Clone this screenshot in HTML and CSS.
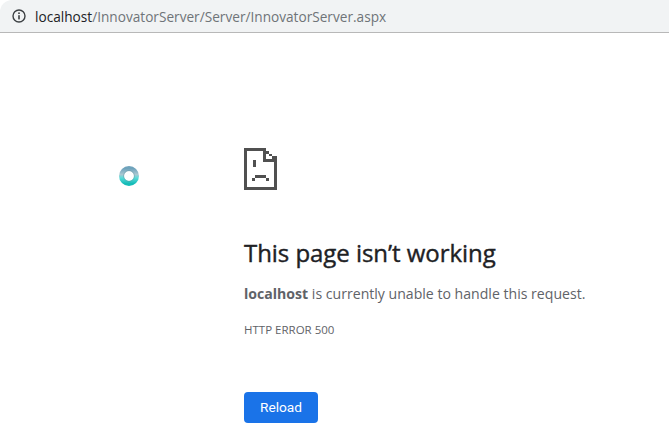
FILE: index.html
```html
<!DOCTYPE html>
<html lang="en">
<head>
<meta charset="utf-8">
<title>localhost</title>
<link rel="stylesheet" href="styles.css">
</head>
<body>
<header class="toolbar">
  <svg class="info-icon" width="14" height="14" viewBox="0 0 14 14" aria-hidden="true">
    <circle cx="7" cy="7" r="6" fill="none" stroke="#3c4043" stroke-width="1.4"/>
    <rect x="6.2" y="6.2" width="1.6" height="4.2" fill="#3c4043"/>
    <rect x="6.2" y="3.4" width="1.6" height="1.6" fill="#3c4043"/>
  </svg>
  <div class="url"><span class="host">localhost</span>/InnovatorServer/Server/InnovatorServer.aspx</div>
</header>
<svg class="spinner" width="20" height="20" viewBox="0 0 20 20" aria-hidden="true">
  <defs>
    <linearGradient id="ring" x1="0" y1="0" x2="0" y2="1">
      <stop offset="0" stop-color="#6fa3bc"/>
      <stop offset="0.4" stop-color="#a9c8d2"/>
      <stop offset="0.62" stop-color="#5cdcda"/>
      <stop offset="1" stop-color="#16bcb8"/>
    </linearGradient>
  </defs>
  <circle cx="10" cy="10" r="7.5" fill="none" stroke="url(#ring)" stroke-width="5"/>
  <circle cx="10" cy="10" r="5.4" fill="none" stroke="#5d8f9c" stroke-opacity="0.5" stroke-width="0.8"/>
</svg>
<main class="content">
  <svg class="sad-icon" width="34" height="42" viewBox="0 0 34 42" shape-rendering="crispEdges" aria-hidden="true">
    <path fill="#505050" d="M0 0H22V3H3V39H30V13H33V42H0Z"/>
    <path fill="#505050" d="M19 3H22V11H33V14H19Z"/>
    <path fill="#505050" d="M22 3H25V6H22ZM25 6H28V8H25ZM28 8H33V11H28Z"/>
    <rect x="9" y="12" width="3" height="7" fill="#505050"/>
    <path fill="#505050" d="M11 27H22V30H11ZM8 30H11V33H8ZM22 30H25V33H22Z"/>
  </svg>
  <h1 class="title">This page isn’t working</h1>
  <p class="message"><strong>localhost</strong> is currently unable to handle this request.</p>
  <p class="code">HTTP ERROR 500</p>
  <button class="reload" type="button">Reload</button>
</main>
</body>
</html>
```
FILE: styles.css
```css
html, body {
  margin: 0;
  padding: 0;
  background: #fff;
  height: 100%;
  overflow: hidden;
}
body {
  font-family: "Open Sans", "Noto Sans", sans-serif;
  position: relative;
}
.toolbar {
  display: flex;
  align-items: center;
  gap: 9px;
  height: 32px;
  padding-left: 12px;
  background: #f1f3f4;
  border-bottom: 1px solid #b8b8b8;
  border-top-left-radius: 12px;
}
.info-icon { flex: none; }
.url {
  font-size: 13.65px;
  color: #6f7478;
  white-space: nowrap;
}
.host { color: #202124; }
.spinner {
  position: absolute;
  left: 119px;
  top: 166px;
}
.content {
  padding: 115px 0 0 244px;
  display: flex;
  flex-direction: column;
  align-items: flex-start;
}
.sad-icon { display: block; }
.title {
  margin: 47px 0 0;
  font-size: 24px;
  line-height: 32px;
  font-weight: 500;
  letter-spacing: -0.05px;
  -webkit-text-stroke: 0.4px #202124;
  color: #202124;
}
.message {
  margin: 15px 0 0;
  font-size: 14.1px;
  line-height: 20px;
  color: #5f6368;
}
.message strong { font-weight: 700; }
.code {
  margin: 18px 0 0;
  font-size: 11.5px;
  line-height: 16px;
  color: #5f6368;
}
.reload {
  margin-top: 54px;
  width: 74px;
  height: 31px;
  padding: 0 0 1px;
  border: none;
  border-radius: 4px;
  background: #1a73e8;
  color: #fff;
  font-family: Roboto, sans-serif;
  font-size: 13.7px;
  font-weight: 400;
}
```
